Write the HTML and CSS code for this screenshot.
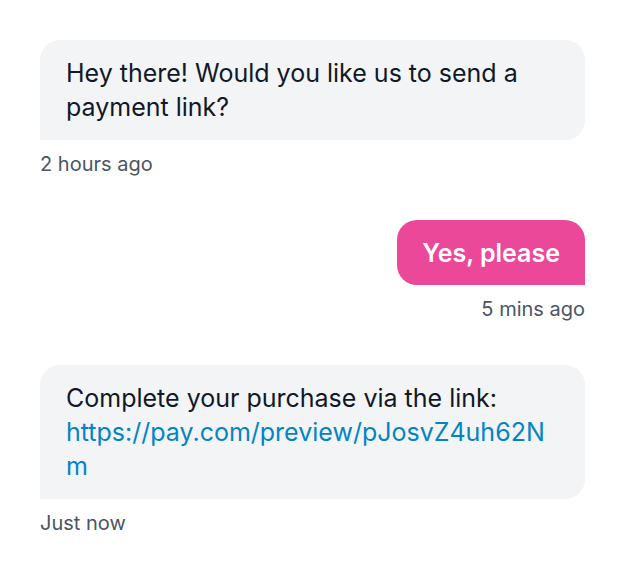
FILE: index.html
```html
<!DOCTYPE html>
<html lang="en">
<head>
    <meta charset="UTF-8">
    <meta name="viewport" content="width=device-width, initial-scale=1.0">
    <title>Chat</title>
    <link rel="stylesheet" href="styles.css">
</head>
<body>
    <div class="chat">
        <div class="message incoming">
            <div class="bubble">Hey there! Would you like us to send a payment link?</div>
            <div class="time">2 hours ago</div>
        </div>

        <div class="message outgoing">
            <div class="bubble">Yes, please</div>
            <div class="time">5 mins ago</div>
        </div>

        <div class="message incoming">
            <div class="bubble">
                Complete your purchase via the link:
                <a href="#" class="link">https://pay.com/preview/pJosvZ4uh62Nm</a>
            </div>
            <div class="time">Just now</div>
        </div>
    </div>
</body>
</html>
```

FILE: styles.css
```css
body {
    font-family: Inter, 'Noto Sans', sans-serif;
    background-color: #fff;
    color: #111827;
    margin: 0;
}

.chat {
    display: flex;
    flex-direction: column;
    gap: 44px;
    padding: 40px;
}

.message {
    display: flex;
    flex-direction: column;
    gap: 12px;
}

.message.incoming {
    align-items: flex-start;
}

.message.outgoing {
    align-items: flex-end;
}

.bubble {
    font-size: 25px;
    line-height: 34px;
    padding: 16px 26px;
    border-radius: 20px;
}

.incoming .bubble {
    background-color: #f3f4f6;
    border-bottom-left-radius: 0;
}

.outgoing .bubble {
    background-color: #ec4899;
    color: #fff;
    font-weight: 600;
    padding: 16px 25px 15px;
    border-bottom-right-radius: 0;
}

.link {
    display: block;
    color: #0284c7;
    text-decoration: none;
    word-break: break-all;
}

.time {
    font-size: 20px;
    line-height: 24px;
    color: #4b5563;
}
```
